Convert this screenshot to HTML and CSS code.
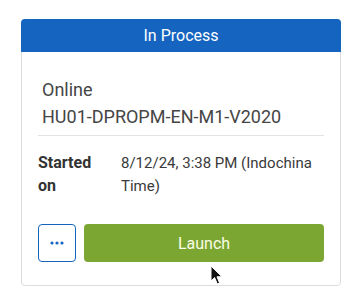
FILE: index.html
```html
<!DOCTYPE html>
<html>

<head>
    <title>Course attempt</title>
    <link rel="stylesheet" href="styles.css">
</head>

<body>

    <div class="card">
        <div class="card-status">In Process</div>
        <div class="card-body">
            <div class="course-title">
                <div>Online</div>
                <div>HU01-DPROPM-EN-M1-V2020</div>
            </div>
            <div class="course-info">
                <span class="info-label">Started on</span>
                <span class="info-value">8/12/24, 3:38 PM (Indochina Time)</span>
            </div>
            <div class="card-actions">
                <button type="button" class="btn-more">
                    <svg width="14" height="4" viewBox="0 0 14 4">
                        <circle cx="2" cy="2" r="1.6" fill="#1565c0" />
                        <circle cx="7" cy="2" r="1.6" fill="#1565c0" />
                        <circle cx="12" cy="2" r="1.6" fill="#1565c0" />
                    </svg>
                </button>
                <button type="button" class="btn-launch">Launch</button>
            </div>
        </div>
    </div>

    <svg class="cursor" width="14" height="21" viewBox="0 0 14 21">
        <path d="M1 1 L1 16 L4.6 12.6 L7.3 19 L9.6 18 L7 11.8 L12 11.8 Z" fill="#111" stroke="#fff" stroke-width="1" stroke-linejoin="round" />
    </svg>

</body>

</html>
```

FILE: styles.css
```css
* {
    margin: 0;
    padding: 0;
    box-sizing: border-box;
    font-family: Roboto, 'Liberation Sans', sans-serif;
}

body {
    background: #ffffff;
    padding: 19px 17px 0 21px;
    position: relative;
}

.card {
    width: 320px;
    border: 1px solid #dcdcdc;
    border-radius: 4px;
}

.card-status {
    margin: -1px -1px 0;
    height: 33px;
    line-height: 33px;
    text-align: center;
    font-size: 16px;
    color: #ffffff;
    background: #1565c0;
    border-radius: 4px 4px 0 0;
}

.card-body {
    padding: 24px 16px 23px;
}

.course-title {
    padding: 0 0 5px 4px;
    border-bottom: 1px solid #e2e2e2;
    font-size: 18px;
    line-height: 27px;
    color: #454545;
}

.course-info {
    display: grid;
    grid-template-columns: 83px 1fr;
    margin-top: 16px;
    font-size: 15px;
    line-height: 22.5px;
    color: #3a3a3a;
}

.info-label {
    font-size: 16px;
    font-weight: bold;
    color: #333333;
    padding-right: 20px;
}

.card-actions {
    display: flex;
    gap: 8px;
    margin-top: 27px;
}

.card-actions button {
    height: 38px;
    border-radius: 4px;
    cursor: pointer;
}

.btn-more {
    width: 38px;
    background: #ffffff;
    border: 1px solid #1565c0;
    display: flex;
    align-items: center;
    justify-content: center;
}

.btn-launch {
    flex: 1;
    border: none;
    background: #7ca632;
    color: #fbfde6;
    font-size: 16px;
}

.cursor {
    position: absolute;
    left: 210px;
    top: 265px;
}
```
